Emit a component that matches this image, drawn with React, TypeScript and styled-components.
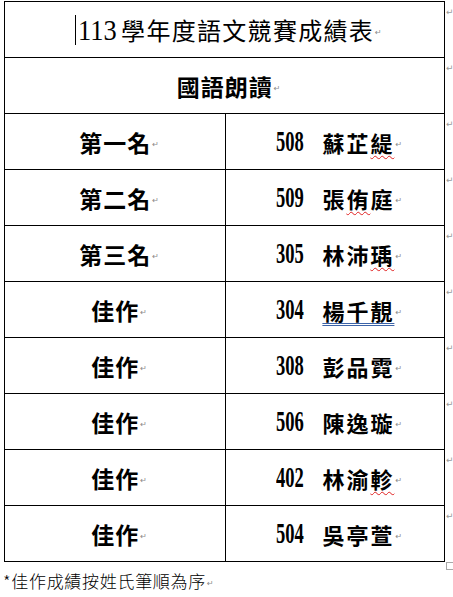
import React from "react";
import styled, { createGlobalStyle, css } from "styled-components";

const Global = createGlobalStyle`
  html, body { margin: 0; padding: 0; background: #fff; }
  body { font-family: "Liberation Serif", "Noto Sans CJK TC", serif; color: #000; }
`;

const Page = styled.div`
  padding: 1px 0 0 4px;
  width: 453px;
  height: 597px;
  box-sizing: border-box;
  overflow: hidden;
`;

const TableArea = styled.div`
  display: flex;
  align-items: flex-start;
`;

const TableBox = styled.div`
  width: 440px;
  border-top: 1px solid #000;
  border-left: 1px solid #000;
  display: flex;
  flex-direction: column;
`;

const Row = styled.div`
  display: flex;
  height: 56px;
`;

const Cell = styled.div<{ $w: number }>`
  width: ${(p) => p.$w}px;
  box-sizing: border-box;
  border-right: 1px solid #000;
  border-bottom: 1px solid #000;
  display: flex;
  align-items: center;
  justify-content: center;
  white-space: nowrap;
`;

const MarkColumn = styled.div`
  display: flex;
  flex-direction: column;
  padding-left: 1px;
`;

const RowEnd = styled.div`
  height: 56px;
  font-size: 9px;
  line-height: 1;
  color: #9a9a9a;
  padding-top: 7px;
  box-sizing: border-box;
  font-family: "DejaVu Sans", sans-serif;
`;

const EndBox = styled.div`
  width: 6px;
  height: 6px;
  border: 1px solid #a8a8a8;
  margin-top: 1px;
`;

const Mark = styled.span`
  font-family: "DejaVu Sans", sans-serif;
  font-size: 8px;
  font-weight: 400;
  letter-spacing: 0;
  color: #8a8a8a;
  margin-left: 1px;
  margin-right: -8px;
  align-self: center;
  position: relative;
  top: 3px;
`;

const Cursor = styled.span`
  display: inline-block;
  width: 1px;
  height: 30px;
  background: #000;
  margin-right: 2px;
`;

const TitleText = styled.span`
  display: flex;
  align-items: center;
  font-family: "Noto Sans CJK TC", sans-serif;
  font-size: 24px;
  font-weight: 400;
  letter-spacing: 1.3px;
`;

const TitleNum = styled.span`
  font-family: "Liberation Serif", serif;
  font-size: 30px;
  letter-spacing: 0;
  display: inline-block;
  transform: scaleX(0.88);
  transform-origin: left center;
  margin-right: -1px;
`;

const Heading = styled.span`
  display: flex;
  align-items: center;
  font-family: "Noto Sans CJK TC", sans-serif;
  font-size: 23px;
  font-weight: 700;
  letter-spacing: 1px;
`;

const Label = styled.span`
  display: flex;
  align-items: center;
  font-family: "Noto Sans CJK TC", sans-serif;
  font-size: 23px;
  font-weight: 700;
  letter-spacing: 1px;
`;

const Entry = styled.span`
  display: flex;
  align-items: center;
  font-family: "Noto Sans CJK TC", sans-serif;
  font-size: 22px;
  font-weight: 700;
`;

const Num = styled.span`
  font-family: "Liberation Serif", serif;
  font-size: 29px;
  font-weight: 700;
  display: inline-block;
  transform: scaleX(0.64);
  transform-origin: left center;
  margin-right: 3px;
`;

const Name = styled.span`
  letter-spacing: 2px;
`;

const Flag = styled.span<{ $kind: "spell" | "grammar" }>`
  text-underline-offset: 3px;
  ${(p) =>
    p.$kind === "spell"
      ? css`
          text-decoration: underline wavy #e02020;
          text-decoration-thickness: 1px;
        `
      : css`
          text-decoration: underline double #3b63a8;
          text-decoration-thickness: 1px;
        `}
`;

const Note = styled.div`
  margin: 1px 0 0 -1px;
  font-family: "Noto Sans CJK TC", sans-serif;
  font-weight: 300;
  font-size: 17px;
  line-height: 20px;
  letter-spacing: 0.7px;
  display: flex;
  align-items: center;
`;

type Part = { t: string; flag?: "spell" | "grammar" };
type Winner = { label: string; num: string; name: Part[] };

const winners: Winner[] = [
  { label: "第一名", num: "508", name: [{ t: "蘇芷" }, { t: "緹", flag: "spell" }] },
  { label: "第二名", num: "509", name: [{ t: "張" }, { t: "侑", flag: "spell" }, { t: "庭" }] },
  { label: "第三名", num: "305", name: [{ t: "林沛" }, { t: "瑀", flag: "spell" }] },
  { label: "佳作", num: "304", name: [{ t: "楊千靚", flag: "grammar" }] },
  { label: "佳作", num: "308", name: [{ t: "彭品霓" }] },
  { label: "佳作", num: "506", name: [{ t: "陳逸璇" }] },
  { label: "佳作", num: "402", name: [{ t: "林渝" }, { t: "軫", flag: "spell" }] },
  { label: "佳作", num: "504", name: [{ t: "吳亭萱" }] },
];

export default function App() {
  return (
    <>
      <Global />
      <Page>
        <TableArea>
          <TableBox>
            <Row>
              <Cell $w={440}>
                <TitleText>
                  <Cursor />
                  <TitleNum>113</TitleNum>
                  學年度語文競賽成績表
                  <Mark>↵</Mark>
                </TitleText>
              </Cell>
            </Row>
            <Row>
              <Cell $w={440}>
                <Heading>
                  國語朗讀
                  <Mark>↵</Mark>
                </Heading>
              </Cell>
            </Row>
            {winners.map((w, i) => (
              <Row key={i}>
                <Cell $w={221}>
                  <Label>
                    {w.label}
                    <Mark>↵</Mark>
                  </Label>
                </Cell>
                <Cell $w={219}>
                  <Entry>
                    <Num>{w.num}</Num>
                    <Name>
                      {w.name.map((p, j) =>
                        p.flag ? (
                          <Flag key={j} $kind={p.flag}>
                            {p.t}
                          </Flag>
                        ) : (
                          <React.Fragment key={j}>{p.t}</React.Fragment>
                        )
                      )}
                    </Name>
                    <Mark>↵</Mark>
                  </Entry>
                </Cell>
              </Row>
            ))}
          </TableBox>
          <MarkColumn>
            {Array.from({ length: 10 }).map((_, i) => (
              <RowEnd key={i}>↵</RowEnd>
            ))}
            <EndBox />
          </MarkColumn>
        </TableArea>
        <Note>
          *佳作成績按姓氏筆順為序
          <Mark>↵</Mark>
        </Note>
      </Page>
    </>
  );
}
